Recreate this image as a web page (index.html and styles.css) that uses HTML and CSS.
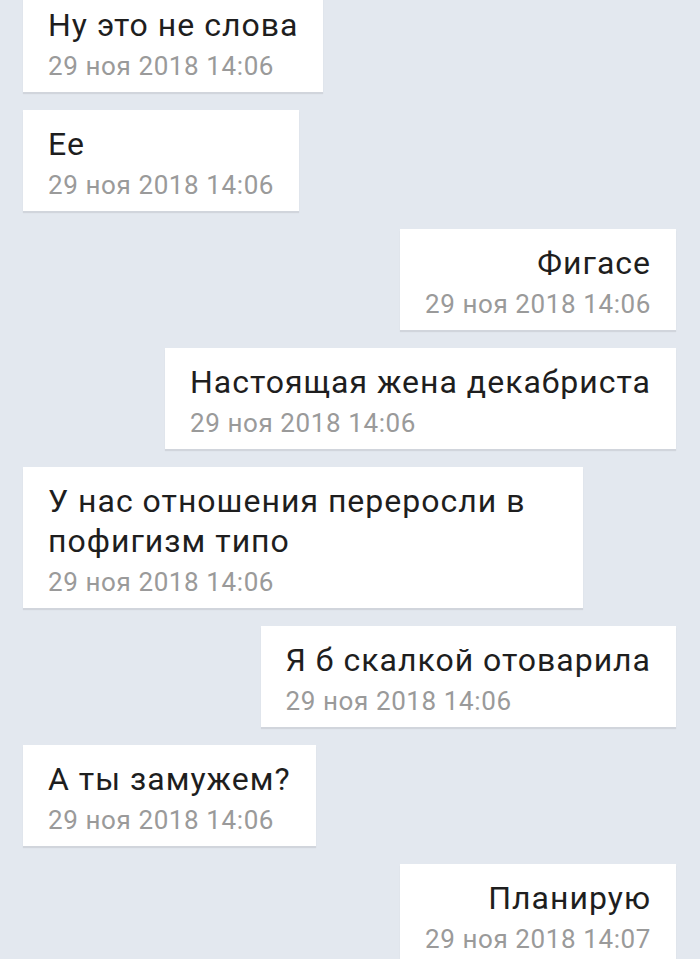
FILE: index.html
```html
<!DOCTYPE html>
<html lang="ru">
<head>
  <meta charset="UTF-8">
  <title>Переписка</title>
  <link rel="stylesheet" href="styles.css">
</head>
<body>
  <div class="chat">
    <div class="msg in">
      <div class="text">Ну это не слова</div>
      <div class="time">29 ноя 2018 14:06</div>
    </div>
    <div class="msg in">
      <div class="text">Ее</div>
      <div class="time">29 ноя 2018 14:06</div>
    </div>
    <div class="msg out">
      <div class="text">Фигасе</div>
      <div class="time">29 ноя 2018 14:06</div>
    </div>
    <div class="msg out">
      <div class="text">Настоящая жена декабриста</div>
      <div class="time">29 ноя 2018 14:06</div>
    </div>
    <div class="msg in">
      <div class="text">У нас отношения переросли в пофигизм типо</div>
      <div class="time">29 ноя 2018 14:06</div>
    </div>
    <div class="msg out">
      <div class="text">Я б скалкой отоварила</div>
      <div class="time">29 ноя 2018 14:06</div>
    </div>
    <div class="msg in">
      <div class="text">А ты замужем?</div>
      <div class="time">29 ноя 2018 14:06</div>
    </div>
    <div class="msg out">
      <div class="text">Планирую</div>
      <div class="time">29 ноя 2018 14:07</div>
    </div>
  </div>
</body>
</html>
```

FILE: styles.css
```css
body {
  font-family: Roboto, 'Noto Sans', sans-serif;
  background-color: #e3e8ef;
  margin: 0;
  padding: 0;
  overflow: hidden;
}

.chat {
  display: flex;
  flex-direction: column;
  gap: 18px;
  padding: 0 24px 0 23px;
  margin-top: -9px;
}

.msg {
  box-sizing: border-box;
  max-width: 560px;
  padding: 14px 25px 11px;
  background: #fff;
  box-shadow: 0 2px 1px rgba(0, 0, 0, 0.08);
}

.msg.in {
  align-self: flex-start;
}

.msg.out {
  align-self: flex-end;
}

.msg.out .text {
  text-align: right;
}

.text {
  font-size: 32px;
  line-height: 40px;
  letter-spacing: 1px;
  color: #1e1e1e;
}

.time {
  margin-top: 6px;
  font-size: 26px;
  line-height: 30px;
  letter-spacing: 0.6px;
  color: #9a9a9a;
}
```
